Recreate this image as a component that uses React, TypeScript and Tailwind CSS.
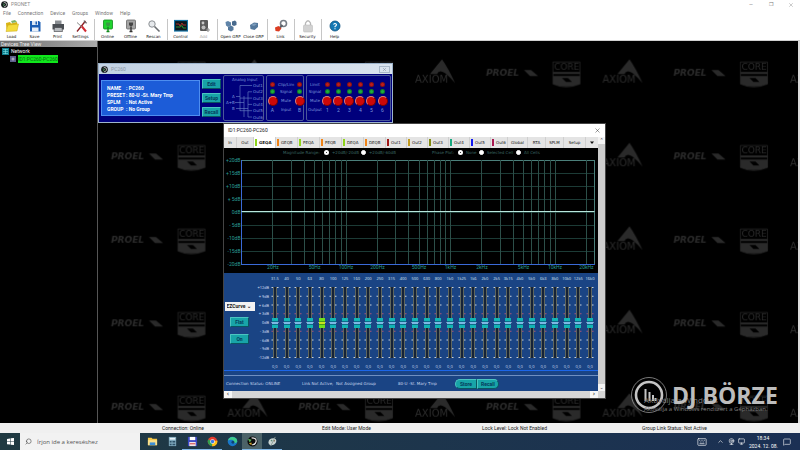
import React from "react";
import { Search, ChevronUp, MessageSquare, Keyboard, Monitor, Webcam, X } from "lucide-react";

/* ---------- toolbar drawings ---------- */

function Glyph({ name }: { name: string }) {
  const box = { viewBox: "0 0 14 14", className: "h-[14px] w-[14px]", "aria-hidden": true } as const;
  switch (name) {
    case "Load":
      return (
        <svg {...box}>
          <path d="M1 4 L5 3 L6 4.5 L12 3 L12.5 6 L3 7 L1.5 11Z" fill="#d9b416" />
          <path d="M6 2 L10 1 L12 3 L7 4Z" fill="#7cb36a" />
          <path d="M3 6 L13.5 5 L12 12 L1 12.5Z" fill="#f4dc3c" stroke="#c9a612" strokeWidth=".5" />
        </svg>
      );
    case "Save":
      return (
        <svg {...box}>
          <path d="M2 2 H11 L12.500 3.500 V12.500 H2Z" fill="#1d5fb4" />
          <rect x="4" y="2" width="6" height="4" fill="#dce8f5" />
          <rect x="7.500" y="2.500" width="1.500" height="3" fill="#1d5fb4" />
          <rect x="4" y="8.500" width="6.500" height="4" fill="#e9f0f8" />
        </svg>
      );
    case "Print":
      return (
        <svg {...box}>
          <path d="M4 1.500 H10.500 V6 H4Z" fill="#8b8f93" />
          <path d="M1.500 5 H13 V10.500 H1.500Z" fill="#4b4f54" />
          <path d="M3.500 8.500 H11 L11.500 12.500 H3Z" fill="#b9bcc0" stroke="#3a3d40" strokeWidth=".6" />
        </svg>
      );
    case "Settings":
      return (
        <svg {...box}>
          <path d="M3 12.500 L11.500 2" stroke="#8a1c22" strokeWidth="1.300" />
          <path d="M7.500 7 L12 12.500" stroke="#d22a32" strokeWidth="2" />
          <path d="M3 3.500 L8 8" stroke="#888" strokeWidth="1" />
          <path d="M10 1.500 L11 3.500 L13 4" stroke="#666" strokeWidth="1.200" fill="none" />
        </svg>
      );
    case "Online":
    case "Offline": {
      const on = name === "Online";
      return (
        <svg {...box}>
          <rect x="2.500" y="1" width="9" height="9" rx="1" fill={on ? "#1fd42f" : "#a4a4a4"} stroke={on ? "#128a1c" : "#666"} strokeWidth=".8" />
          <path d="M5 3.500 H9 V6 L7 8 L5 6Z" fill={on ? "#3a9a44" : "#444"} />
          <path d="M7 8 V13 M5.500 12.500 H8.500" stroke={on ? "#128a1c" : "#333"} strokeWidth="1.400" />
        </svg>
      );
    }
    case "Rescan":
      return (
        <svg {...box}>
          <circle cx="5" cy="5" r="3.200" fill="#e6e9ec" stroke="#8d9195" strokeWidth="1" />
          <path d="M7.500 7.500 L12.500 12.500" stroke="#6a6e72" strokeWidth="1.600" />
        </svg>
      );
    case "Control":
      return (
        <svg {...box}>
          <rect x=".5" y="1.500" width="13" height="10.500" fill="#0d171c" stroke="#1775a8" strokeWidth="1.200" />
          <path d="M2 5 H5 L6 7 L8 4 L9 6 H12" stroke="#b5352c" strokeWidth=".9" fill="none" />
          <path d="M2 8 H6 L8 6.500 L9 9 H12" stroke="#2f9c3a" strokeWidth=".9" fill="none" />
        </svg>
      );
    case "Add":
      return (
        <svg {...box}>
          <rect x="3" y="1" width="8" height="11" rx="1" fill="#5a5a5a" />
          <circle cx="6" cy="4" r="1.400" fill="#c8c8c8" />
          <circle cx="6.500" cy="8.500" r="2" fill="#bdbdbd" />
          <path d="M11 9 V13 M9 11 H13" stroke="#999" strokeWidth="1.200" />
        </svg>
      );
    case "Open GRP":
      return (
        <svg {...box}>
          <path d="M1.500 3 L4 2 L7 3.500 V6.500 L4 8 L2 6.500Z" fill="#5f84a8" />
          <path d="M8 2.500 L11 1.500 L12.500 3 V6 L10 7 L8 6Z" fill="#47698c" />
          <path d="M4 8 L7 6.500 L9.500 8 V11 L7 12.500 L4 11Z" fill="#54789c" />
        </svg>
      );
    case "Close GRP":
      return (
        <svg {...box}>
          <path d="M3 6 L7 3.500 L11 4 V8 L7.500 11 L3.500 10Z" fill="#54789c" />
          <path d="M4 6 L7 4.500 L10 5 L7 7Z" fill="#7d9dbd" />
        </svg>
      );
    case "Link":
      return (
        <svg {...box}>
          <circle cx="9.500" cy="4.500" r="3" fill="none" stroke="#777d86" strokeWidth="1.600" />
          <path d="M5 9.500 L8.500 6" stroke="#5b6068" strokeWidth="2" />
          <path d="M1 8.500 L4.500 7 L7.500 9.500 L5 12.500 L1.500 12Z" fill="#dc3d22" />
        </svg>
      );
    case "Security":
      return (
        <svg {...box}>
          <path d="M4.500 7 V4 Q7 -.5 9.500 4 V7" fill="none" stroke="#b8b8b8" strokeWidth="1.300" />
          <rect x="2.500" y="6" width="9" height="7" rx="1" fill="#d2d2d2" stroke="#b4b4b4" strokeWidth=".5" />
        </svg>
      );
    default:
      return (
        <svg {...box}>
          <circle cx="7" cy="7" r="5" fill="#1478b4" stroke="#0b4f7d" strokeWidth=".8" />
          <path d="M5.500 5.500 Q7 3.500 8.500 5.500 Q8.500 6.800 7 7.500 V8.300 M7 9.200 V10.200" stroke="#fff" strokeWidth="1.100" fill="none" />
        </svg>
      );
  }
}

const toolGroups = [
  ["Load", "Save", "Print", "Settings"],
  ["Online", "Offline", "Rescan"],
  ["Control", "Add"],
  ["Open GRP", "Close GRP"],
  ["Link"],
  ["Security"],
  ["Help"],
];

function Emblem({ className }: { className: string }) {
  return (
    <svg viewBox="0 0 10 10" className={className} aria-hidden>
      <circle cx="5" cy="5" r="4.800" fill="#15191c" />
      <path d="M4 2 Q8.500 2 8 5.500 Q7 8.500 4.500 8" stroke="#e8e8e8" strokeWidth="1" fill="none" />
      <path d="M2.500 4 L5 5 L3 7.500" stroke="#58b368" strokeWidth="1" fill="none" />
    </svg>
  );
}

/* ---------- wallpaper ---------- */

function Wallpaper() {
  return (
    <svg className="absolute inset-0 h-full w-full" aria-hidden>
      <defs>
        <pattern id="brands" x="-62" y="-2" width="187.500" height="83.500" patternUnits="userSpaceOnUse">
          <g fill="#2a2a2a" fontFamily="'DejaVu Sans', sans-serif">
            <path d="M19 35 L31 20.500 Q37 29 44 44 Q39 38 34 34 Q28 30 26 35Z" />
            <text x="4" y="44" fontSize="10">AXIOM</text>
            <text x="75" y="37" fontSize="9" fontWeight="bold" fontStyle="italic">PROEL</text>
            <path d="M113 31 H120 L127 37 H119Z" />
            <path d="M142 23 H169 V45 Q155 51 142 45Z" fill="none" stroke="#2a2a2a" strokeWidth=".7" />
            <text x="143" y="31" fontSize="9">CORE</text>
            <path d="M142 33 H169 V35 H142Z" />
            <path d="M142 37 H169 V45 Q155 50 142 45Z" />
            <path d="M151 39 H157 L161 43 H155Z" fill="#000" />
          </g>
        </pattern>
      </defs>
      <rect width="100%" height="100%" fill="url(#brands)" />
    </svg>
  );
}

/* ---------- device overview window ---------- */

function Led({ color }: { color: string }) {
  return <span className={`h-[5px] w-[5px] rounded-full border border-black/30 ${color}`} />;
}

function MuteButton({ label }: { label: string }) {
  return (
    <button
      aria-label={`Mute ${label}`}
      className="h-[10px] w-[10px] rounded-full border border-[#d88080] border-r-[#700] border-b-[#700] bg-[#cc0808]"
    />
  );
}

function Strip({ label }: { label: string }) {
  return (
    <div className="flex w-[11px] shrink-0 flex-col items-center text-[5px] leading-[5px] text-[#7d98dc]">
      <Led color="bg-[#c01c1c]" />
      <span className="h-[2px]" />
      <Led color="bg-[#1fb03c]" />
      <span className="h-[2px]" />
      <MuteButton label={label} />
      <span className="mt-[2px]">{label}</span>
    </div>
  );
}

function Captions({ rows }: { rows: string[] }) {
  return (
    <div className="flex flex-col items-center font-['DejaVu_Sans',sans-serif] text-[4px] leading-[5px] whitespace-nowrap text-[#7d98dc]">
      <span>{rows[0]}</span>
      <span className="mt-[2px]">{rows[1]}</span>
      <span className="mt-1">{rows[2]}</span>
      <span className="mt-1">{rows[3]}</span>
    </div>
  );
}

const tealButton =
  "rounded-[1px] border border-[#4cc4c0] border-r-[#0a5560] border-b-[#0a5560] bg-[#18a4a8] font-['Roboto',sans-serif] text-[5px] leading-[6px] font-bold text-[#053a5c]";

function DeviceWindow() {
  const outs = ["Out1", "Out2", "Out3", "Out4", "Out5", "Out6"];
  const info = [
    ["NAME", "PC260"],
    ["PRESET", "80-U -St. Mary Tmp"],
    ["SPLM", "Not Active"],
    ["GROUP", "No Group"],
  ];
  return (
    <section className="absolute top-[22px] left-0 w-[295px] border border-[#9db4cc] bg-[#00007c]">
      <header className="flex h-[10px] items-center gap-[3px] bg-gradient-to-r from-[#c3d2e3] to-[#d9e3ee] px-[2px] text-[5px] text-[#8c98a6]">
        <Emblem className="h-[7px] w-[7px]" />
        <span className="flex-1">PC260</span>
        <button aria-label="Close device" className="flex h-[7px] w-[11px] items-center justify-center border border-[#a9b8c8] text-[#6b7886]">
          <X size={5} />
        </button>
      </header>
      <div className="flex h-[48px] gap-[2px] py-[1px] pr-[1px] pl-[2px]">
        <div className="my-[5px] flex w-[99px] shrink-0 flex-col justify-center gap-[1px] border border-[#4d8ef0] bg-[#1c5cd8] pl-[5px] text-[5px] leading-[6px] font-bold text-white">
          {info.map(([k, v]) => (
            <div key={k} className="flex gap-[1px]">
              <span className="w-[18px]">{k}</span>
              <span>: {v}</span>
            </div>
          ))}
        </div>
        <div className="my-1 flex w-[19px] shrink-0 flex-col justify-between">
          {["Edit", "Setup", "Recall"].map((b) => (
            <button key={b} className={`h-[10px] ${tealButton}`}>{b}</button>
          ))}
        </div>
        <div className="w-[41px] shrink-0 rounded-[2px] border border-[#4a5898]">
          <svg viewBox="0 0 39 44" className="h-[44px] w-[39px]" role="img" aria-label="Analog input routing">
            <g fill="#7d98dc" fontSize="4" fontFamily="'DejaVu Sans', sans-serif">
              <text x="8" y="5">Analog Input</text>
              {outs.map((o, i) => (
                <text key={o} x="29" y={11 + i * 6.3}>{o}</text>
              ))}
              <text x="8" y="22">A</text>
              <text x="2" y="28">A+B</text>
              <text x="8" y="34">B</text>
            </g>
            <g stroke="#6c86c8" strokeWidth=".6">
              {outs.map((o, i) => (
                <path key={o} d={`M${i % 2 ? 24 : 16} ${9.5 + i * 6.3} H28`} />
              ))}
              <path d="M16 9.500 V35 M20 20 V41 M24 15.800 V41 M12 20.500 H16 M11 26.500 H20 M12 32.500 H24" />
            </g>
          </svg>
        </div>
        <div className="flex w-[38px] shrink-0 justify-between rounded-[2px] border border-[#4a5898] pt-[6px]">
          <Strip label="A" />
          <Captions rows={["Clip/Lim", "Signal", "Mute", "Input"]} />
          <Strip label="B" />
        </div>
        <div className="flex flex-1 justify-between rounded-[2px] border border-[#4a5898] pt-[6px] pr-[2px] pl-[1px]">
          <Captions rows={["Limit", "Signal", "Mute", "Output"]} />
          {["1", "2", "3", "4", "5", "6"].map((n) => (
            <Strip key={n} label={n} />
          ))}
        </div>
      </div>
    </section>
  );
}

/* ---------- equaliser window ---------- */

const eqTabs = [
  { t: "In", w: "w-[13px]", c: "" },
  { t: "Out", w: "w-[17px]", c: "" },
  { t: "GEQA", w: "w-[22px]", c: "bg-[#8fd41c]" },
  { t: "GEQB", w: "w-[22px]", c: "bg-[#f08418]" },
  { t: "PEQA", w: "w-[22px]", c: "bg-[#8fd41c]" },
  { t: "PEQB", w: "w-[22px]", c: "bg-[#f08418]" },
  { t: "DEQA", w: "w-[22px]", c: "bg-[#8fd41c]" },
  { t: "DEQB", w: "w-[22px]", c: "bg-[#f08418]" },
  { t: "Out1", w: "w-[21px]", c: "bg-[#a01818]" },
  { t: "Out2", w: "w-[21px]", c: "bg-[#c09a20]" },
  { t: "Out3", w: "w-[21px]", c: "bg-[#808a10]" },
  { t: "Out4", w: "w-[21px]", c: "bg-[#18a880]" },
  { t: "Out5", w: "w-[21px]", c: "bg-[#1018f0]" },
  { t: "Out6", w: "w-[17px]", c: "bg-[#a81850]" },
  { t: "Global", w: "w-[20px]", c: "" },
  { t: "RTA", w: "w-[18px]", c: "" },
  { t: "SPLM", w: "w-[18px]", c: "" },
  { t: "Setup", w: "w-[22px]", c: "" },
];

function RadioOption({ group, label, on, width }: { group: string; label: string; on?: boolean; width: string }) {
  return (
    <label className={`flex items-center gap-[3px] ${width}`}>
      <input
        type="radio"
        name={group}
        defaultChecked={on}
        className="h-[5px] w-[5px] shrink-0 appearance-none rounded-full border border-white bg-white checked:border-2 checked:bg-black"
      />
      <span className="whitespace-nowrap">{label}</span>
    </label>
  );
}

function ResponsePlot() {
  const px = (f: number) => 17 + Math.log10(f / 10) * 104.5;
  const freqs: number[] = [];
  [10, 100, 1000, 10000].forEach((d) => {
    for (let k = 1; k < 10; k++) if (d * k > 10 && d * k <= 20000) freqs.push(d * k);
  });
  const marks: [number, string][] = [
    [20, "20Hz"], [50, "50Hz"], [100, "100Hz"], [200, "200Hz"], [500, "500Hz"],
    [1000, "1kHz"], [2000, "2kHz"], [5000, "5kHz"], [10000, "10kHz"], [20000, "20kHz"],
  ];
  const levels = ["+20dB", "+15dB", "+10dB", "+ 5dB", "0dB", "- 5dB", "-10dB", "-15dB", "-20dB"];
  return (
    <svg viewBox="0 0 373 116" className="block h-[116px] w-full" role="img" aria-label="Magnitude response">
      <g stroke="#2c4f49" strokeWidth="1" shapeRendering="crispEdges">
        {levels.map((l, i) => (
          <path key={l} d={`M17 ${3 + i * 13} H370`} stroke={i === 0 ? "#4b7f7a" : "#1c3b36"} />
        ))}
        {freqs.map((f) => (
          <path key={f} d={`M${px(f)} 3 V107`} />
        ))}
        <path d="M370 3 V107" stroke="#4b7f7a" />
        <path d="M17 3 V107 H370" stroke="#3a6ad8" fill="none" />
      </g>
      <path d="M17 54.500 H370" stroke="#b9e6dc" strokeWidth="1.200" />
      <g fill="#2a9c94" fontSize="5" fontFamily="Roboto, sans-serif">
        {levels.map((l, i) => (
          <text key={l} x="16" y={5 + i * 13} textAnchor="end">{l}</text>
        ))}
        {marks.map(([f, l]) => (
          <text key={l} x={px(f)} y="112" textAnchor="middle">{l}</text>
        ))}
      </g>
    </svg>
  );
}

const bands = [
  "31.5", "40", "50", "63", "80", "100", "125", "160", "200", "250", "315", "400", "500", "630",
  "800", "1k0", "1k25", "1k6", "2k0", "2k5", "3k15", "4k0", "5k0", "6k3", "8k0", "10k0", "12k5", "16k0",
];

function Fader({ band, active }: { band: string; active: boolean }) {
  return (
    <div className="flex min-w-0 flex-1 flex-col items-center">
      <label htmlFor={`band-${band}`} className="h-[9px] text-[4px] leading-[6px] text-[#dbe6f5]">{band}</label>
      <div className="relative h-[75px] w-2">
        <svg viewBox="0 0 8 75" className="h-[75px] w-2" aria-hidden>
          <path d="M2.500 2 V73 M5.500 2 V73" stroke="#5f665e" strokeWidth="1" />
          <path d="M4 2 V73" stroke="#152338" strokeWidth="2" />
          {[0, 1, 2, 3, 4, 5, 6, 7, 8].map((i) => (
            <path
              key={i}
              d={`M.5 ${2.5 + i * 8.75} H2 M6 ${2.5 + i * 8.75} H7.500`}
              stroke={i === 3 || i === 5 ? "#a85578" : "#c9d2dc"}
              strokeWidth="1"
            />
          ))}
        </svg>
        <input
          id={`band-${band}`}
          type="range"
          min={-12}
          max={12}
          defaultValue={0}
          className={`absolute inset-0 h-[75px] w-2 appearance-none bg-transparent [writing-mode:vertical-lr] [direction:rtl] [&::-webkit-slider-thumb]:h-[10px] [&::-webkit-slider-thumb]:w-[6px] [&::-webkit-slider-thumb]:appearance-none ${
            active
              ? "[&::-webkit-slider-thumb]:bg-[linear-gradient(#6fe01c_3px,#4a9a18_3px,#4a9a18_4px,#c8e020_4px,#c8e020_6px,#4a9a18_6px,#4a9a18_7px,#6fe01c_7px)]"
              : "[&::-webkit-slider-thumb]:bg-[linear-gradient(#12b5b5_3px,#0d6c88_3px,#0d6c88_4px,#7cb8e4_4px,#7cb8e4_6px,#0d6c88_6px,#0d6c88_7px,#12b5b5_7px)]"
          }`}
        />
      </div>
      <output htmlFor={`band-${band}`} className="mt-[4px] text-[4px] leading-[6px] text-[#c9d8ee]">0,0</output>
    </div>
  );
}

function EqWindow() {
  return (
    <section className="absolute top-[83px] left-[126px] flex w-[381px] flex-col bg-white font-['DejaVu_Sans',sans-serif] shadow-[0_0_0_1px_#444]">
      <header className="flex h-[13px] items-center justify-between pr-1 pl-1 font-['Roboto',sans-serif] text-[5px] text-[#222]">
        <span>ID1:PC260-PC260</span>
        <button aria-label="Close window" className="text-[#222]">
          <X size={7} strokeWidth={1.5} />
        </button>
      </header>
      <div className="flex">
        <div className="min-w-0 flex-1">
          <nav className="flex h-[11px] bg-[#e4e4e4] text-[4px] text-[#111]" role="tablist">
            {eqTabs.map((tab) => (
              <button
                key={tab.t}
                role="tab"
                aria-selected={tab.t === "GEQA"}
                className={`flex shrink-0 items-center gap-[2px] border-r border-[#cfcfcf] ${tab.w} ${
                  tab.c ? "justify-start pl-[1px]" : "justify-center"
                } ${tab.t === "GEQA" ? "bg-white font-bold" : ""}`}
              >
                {tab.c && <span className={`h-[7px] w-[2px] shrink-0 ${tab.c}`} />}
                <span>{tab.t}</span>
              </button>
            ))}
            <button aria-label="More tabs" className="flex flex-1 items-center justify-center">
              <svg viewBox="0 0 4 3" className="h-[3px] w-1" aria-hidden><path d="M0 .5 H4 L2 3Z" fill="#111" /></svg>
            </button>
          </nav>
          <div className="bg-black">
            <div className="flex h-[9px] items-center pl-[59px] text-[4px] text-[#3a6560]">
              <span className="w-[41px] whitespace-nowrap">Magnitude Range:</span>
              <RadioOption group="range" label="+20dB/-20dB" on width="w-[37px]" />
              <RadioOption group="range" label="+20dB/-60dB" width="w-[71px]" />
              <span className="w-[26px] whitespace-nowrap">Phase Plot:</span>
              <RadioOption group="phase" label="None" on width="w-[21px]" />
              <RadioOption group="phase" label="Selected Cell" width="w-[37px]" />
              <RadioOption group="phase" label="All Cells" width="w-[26px]" />
            </div>
            <ResponsePlot />
          </div>
          <div className="bg-[#1a4484] text-[#c9d8ee]">
            <div className="flex h-[98px] border-b border-[#1c66e8] pt-[3px]">
              <div className="flex w-[31px] flex-col items-center pt-[26px]">
                <select aria-label="Curve" className="h-[9px] w-[30px] appearance-none bg-[#f2f2f2] pl-[2px] font-['Roboto',sans-serif] text-[5px] font-bold text-[#222]">
                  <option>EZCurve ⌄</option>
                </select>
                <button className={`mt-[6px] h-[10px] w-[19px] ${tealButton}`}>Flat</button>
                <button className={`mt-[7px] h-[10px] w-[19px] ${tealButton}`}>On</button>
              </div>
              <div className="mt-[9px] flex h-[75px] w-[14px] flex-col justify-between text-right font-['Roboto',sans-serif] text-[4px] leading-[5px] whitespace-nowrap">
                {["+12dB", "+ 9dB", "+ 6dB", "+ 3dB", "0dB", "- 3dB", "- 6dB", "- 9dB", "-12dB"].map((l) => (
                  <span key={l}>{l}</span>
                ))}
              </div>
              <div className="flex flex-1 pr-[2px] font-['Open_Sans',sans-serif]">
                {bands.map((b) => (
                  <Fader key={b} band={b} active={b === "80"} />
                ))}
              </div>
            </div>
            <div className="h-[5px] border-b border-[#6f8fc0]" />
            <div className="flex h-[15px] items-center pl-[2px] text-[4px]">
              <span className="w-[76px] whitespace-nowrap">Connection Status: ONLINE</span>
              <span className="w-[96px] whitespace-nowrap">Link Not Active,&nbsp; Not Assigned Group</span>
              <span className="w-[57px] whitespace-nowrap">80-U -St. Mary Tmp</span>
              <button className={`h-[10px] w-[22px] rounded-l-full ${tealButton}`}>Store</button>
              <button className={`h-[10px] w-[22px] rounded-r-full ${tealButton}`}>Recall</button>
            </div>
          </div>
        </div>
        <div className="flex w-[7px] flex-col items-center justify-between bg-[#cdcdcd] text-[#333]">
          <span className="flex h-[7px] w-full items-center justify-center bg-[#f3f3f3] text-[5px]">⌃</span>
          <span className="flex h-[7px] w-full items-center justify-center bg-[#f3f3f3] text-[5px]">⌄</span>
        </div>
      </div>
      <div className="flex h-[7px] items-center justify-between bg-[#d6d6d6] pr-[7px] text-[7px] text-[#333]">
        <span className="flex h-full w-2 items-center justify-center bg-[#f6f6f6]">‹</span>
        <span className="flex h-full w-2 items-center justify-center bg-[#f6f6f6]">›</span>
      </div>
    </section>
  );
}

/* ---------- desktop overlays ---------- */

function Watermark() {
  return (
    <div className="absolute right-[19px] bottom-[6px] flex h-[44px] w-[148px] items-center gap-[5px] font-['Open_Sans',sans-serif] text-[#bdbdbd]">
      <div className="absolute top-[22px] left-[13px] text-[#7d7d7d]">
        <p className="text-[8px] leading-[9px] whitespace-nowrap">Aktiválja a Windows</p>
        <p className="text-[6px] leading-[10px] whitespace-nowrap">Aktiválja a Windows rendszert a Gépházban.</p>
      </div>
      <svg viewBox="0 0 36 36" className="h-9 w-9 shrink-0" aria-hidden>
        <circle cx="18" cy="18" r="17.500" fill="none" stroke="#aaa" strokeWidth=".7" />
        <circle cx="18" cy="18" r="13" fill="none" stroke="#c4c4c4" strokeWidth="2.600" />
        <path d="M14.500 12 V24 M18.500 15 V24 M22 18 V24 M24.500 21 V24" stroke="#c4c4c4" strokeWidth="2" />
      </svg>
      <span className="relative text-[23px] leading-[24px] font-bold whitespace-nowrap">DJ BÖRZE</span>
    </div>
  );
}

/* ---------- Windows taskbar ---------- */

const apps = [
  {
    name: "File Explorer", running: false, active: false,
    art: <><path d="M1 2 H5 L6 3 H11 V10 H1Z" fill="#f5c84a" /><path d="M1 4.500 H11 V10 H1Z" fill="#fbe08a" /><path d="M3 7 H9 V10 H3Z" fill="#3d8fd6" /></>,
  },
  {
    name: "Calculator", running: false, active: false,
    art: <><path d="M2 1 H10 V11 H2Z" fill="#7fa9bd" /><path d="M3 2 H9 V4 H3Z" fill="#e5f1f7" /><path d="M3 5.500 H5 V7 H3Z M6 5.500 H9 V7 H6Z M3 8.500 H5 V10 H3Z M6 8.500 H9 V10 H6Z" fill="#2d5168" /></>,
  },
  {
    name: "Total Commander", running: true, active: false,
    art: <><path d="M1 1 H11 V11 H1Z" fill="#3b48c4" /><path d="M3 1 H9 V4.500 H3Z" fill="#fff" /><path d="M2.500 6.500 H9.500 V11 H2.500Z" fill="#f0e4e6" /><path d="M3 8 H9 V9 H3Z" fill="#c33" /></>,
  },
  {
    name: "Chrome", running: true, active: false,
    art: <><circle cx="6" cy="6" r="5.200" fill="#e33b2e" /><path d="M6 6 L1.300 3.800 A5.200 5.200 0 0 0 5.500 11.200Z" fill="#30a14e" /><path d="M6 6 L11.200 5 A5.200 5.200 0 0 1 5.500 11.200Z" fill="#fbc116" /><circle cx="6" cy="6" r="2.500" fill="#fff" /><circle cx="6" cy="6" r="1.900" fill="#3b78e7" /></>,
  },
  {
    name: "Edge", running: false, active: false,
    art: <><circle cx="6" cy="6" r="5.200" fill="#1876c9" /><path d="M1 5 A5.200 5.200 0 0 1 11.200 6 Q10 8.500 7 7.500 Q8 4.500 5 4 Q2.500 3.800 1 5Z" fill="#3fcb8c" /><circle cx="6.500" cy="6.800" r="1.600" fill="#0d3f77" /></>,
  },
  {
    name: "Pronet", running: true, active: true,
    art: <><circle cx="6" cy="6" r="5.500" fill="#0b0b0b" /><path d="M5 2 Q10.500 2 10 6 Q9 10 5.500 9.500" stroke="#e6e6e6" strokeWidth="1.200" fill="none" /><path d="M1 3 L5 4 L3 7Z" fill="#56b35a" /><path d="M2 8 L5 7 L5 10Z" fill="#d6a72c" /></>,
  },
  {
    name: "Paint", running: true, active: false,
    art: <><path d="M1.500 7 Q2 2.500 7 2.500 Q11 3 10 6.500 Q8 10.500 4 10 Q1.500 9.500 1.500 7Z" fill="#c9d4d2" /><circle cx="5" cy="5" r=".9" fill="#5a8a76" /><circle cx="7.800" cy="5.300" r=".9" fill="#886b4a" /><path d="M4 11 L9 1" stroke="#8d9c98" strokeWidth="1" /></>,
  },
];

function Taskbar() {
  return (
    <footer className="flex h-[17px] shrink-0 items-stretch bg-gradient-to-r from-[#203a42] to-[#1b3054] text-white">
      <button aria-label="Start" className="flex w-5 items-center justify-center">
        <svg viewBox="0 0 8 8" className="h-[7px] w-[7px]" aria-hidden>
          <path d="M0 1 L3.600 .5 V3.700 H0Z M4.200 .4 L8 0 V3.700 H4.200Z M0 4.300 H3.600 V7.500 L0 7Z M4.200 4.300 H8 V8 L4.200 7.600Z" fill="#fff" />
        </svg>
      </button>
      <label className="flex w-[120px] items-center gap-[5px] bg-[#f2f2f2] pl-[5px] text-[#444]">
        <Search size={7} strokeWidth={2} className="-scale-x-100" />
        <input aria-label="Keresés" placeholder="Írjon ide a kereséshez" className="w-[90px] bg-transparent font-['Open_Sans',sans-serif] text-[6px] leading-[8px] placeholder:text-[#555]" />
      </label>
      <div className="flex pl-[2px]">
        {apps.map((a) => (
          <button
            key={a.name}
            aria-label={a.name}
            className={`flex w-5 items-center justify-center border-b ${a.running ? "border-[#7fb6e6]" : "border-transparent"} ${
              a.active ? "bg-[#4b6268]" : ""
            }`}
          >
            <svg viewBox="0 0 12 12" className="h-[11px] w-[11px]" aria-hidden>{a.art}</svg>
          </button>
        ))}
      </div>
      <div className="ml-auto flex items-center pr-[9px]">
        <Keyboard size={10} strokeWidth={1.5} className="mr-[10px]" />
        <ChevronUp size={7} className="mr-[4px]" />
        <Webcam size={7} className="mr-[3px]" />
        <Monitor size={7} className="mr-[4px]" />
        <div className="w-[28px] text-center text-[5px] leading-[8px] whitespace-nowrap">
          <div>18:34</div>
          <div>2024. 12. 08.</div>
        </div>
        <MessageSquare size={8} strokeWidth={1.8} className="ml-[6px]" />
      </div>
    </footer>
  );
}

/* ---------- application ---------- */

export default function App() {
  return (
    <div className="flex h-screen flex-col overflow-hidden bg-white font-['Roboto','Noto_Sans',sans-serif] text-[5px] leading-[7px] text-[#222]">
      <header className="flex h-[9px] shrink-0 items-center gap-[3px] pr-[6px] pl-[1px] text-[5px] text-[#8a8a8a]">
        <Emblem className="h-[7px] w-[7px]" />
        <h1 className="flex-1">PRONET</h1>
        <div className="flex gap-[14px] text-[#777]">
          <button aria-label="Minimize" className="w-[6px]">—</button>
          <button aria-label="Restore" className="w-[6px]">❐</button>
          <button aria-label="Close"><X size={6} strokeWidth={1.5} /></button>
        </div>
      </header>
      <nav className="flex h-[9px] shrink-0 items-center gap-[7px] pl-[3px] text-[#777]">
        {["File", "Connection", "Device", "Groups", "Window", "Help"].map((m) => (
          <button key={m}>{m}</button>
        ))}
      </nav>
      <div className="flex h-[23px] shrink-0 items-center border-b border-[#d0d0d0]">
        {toolGroups.map((group, g) => (
          <React.Fragment key={group[0]}>
            {g > 0 && <span className="mx-[1px] h-[21px] w-[2px] border-r border-[#c6c6c6]" />}
            {group.map((t) => (
              <button
                key={t}
                className={`flex w-[23px] flex-col items-center font-['DejaVu_Sans',sans-serif] text-[4px] leading-[7px] whitespace-nowrap ${t === "Add" ? "text-[#aaa]" : "text-[#111]"}`}
              >
                <Glyph name={t} />
                {t}
              </button>
            ))}
          </React.Fragment>
        ))}
      </div>

      <div className="flex min-h-0 flex-1 border-r-2 border-[#dcdcdc] bg-black">
        <aside className="w-[98px] shrink-0 border-r border-[#555]">
          <h2 className="h-[6px] bg-gradient-to-r from-[#6f6f6f] to-[#aaa] pl-[1px] text-[5px] leading-[6px] text-[#eee]">Devices Tree View</h2>
          <ul className="text-white">
            <li className="flex h-[7px] items-center gap-[2px] pt-[1px] pl-[2px]">
              <svg viewBox="0 0 7 7" className="h-[7px] w-[7px]" aria-hidden>
                <rect width="7" height="7" fill="#0f7d8c" />
                <path d="M1 1.500 H6 M1 3.500 H6 M3.500 1 V6 M1 5.500 H6" stroke="#7fe3e6" strokeWidth=".6" />
              </svg>
              Network
            </li>
            <li className="mt-[1px] flex h-[8px] items-center gap-[2px] pl-[10px]">
              <svg viewBox="0 0 6 6" className="h-[6px] w-[6px]" aria-hidden>
                <rect width="6" height="6" fill="#5d5f8c" />
                <circle cx="3" cy="3" r="1.500" fill="#aab" />
              </svg>
              <button className="h-[8px] w-[40px] bg-[#10e81c] text-[5px] leading-[7px] whitespace-nowrap text-[#0a6a12]">ID1:PC260-PC260</button>
            </li>
          </ul>
        </aside>
        <main className="relative min-w-0 flex-1 overflow-hidden">
          <Wallpaper />
          <DeviceWindow />
          <EqWindow />
          <Watermark />
        </main>
      </div>

      <div className="grid h-[10px] shrink-0 grid-cols-5 items-center bg-[#f0f0f0] text-[5px] text-[#222]">
        <span />
        {["Connection: Online", "Edit Mode: User Mode", "Lock Level: Lock Not Enabled", "Group Link Status: Not Active"].map((s) => (
          <span key={s} className="pl-[2px]">{s}</span>
        ))}
      </div>
      <Taskbar />
    </div>
  );
}
